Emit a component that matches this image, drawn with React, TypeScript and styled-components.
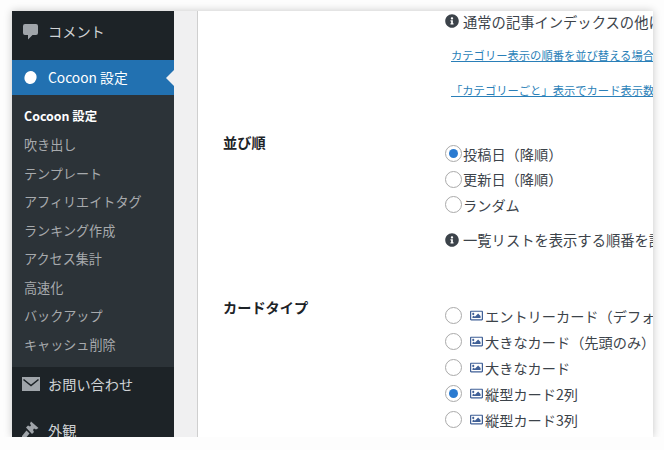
import styled, { createGlobalStyle } from "styled-components";
import { FaInfoCircle, FaRegImage } from "react-icons/fa";

const GlobalStyle = createGlobalStyle`
  html, body {
    margin: 0;
    padding: 0;
    background: #fdfdfd;
  }
  body {
    font-family: "Noto Sans CJK JP", "Noto Sans", sans-serif;
  }
`;

const Frame = styled.div`
  display: flex;
  width: 641px;
  height: 426px;
  margin: 11px 0 0 12px;
  overflow: hidden;
  background: #fff;
  box-shadow: 0 0 8px rgba(0, 0, 0, 0.22);
`;

const Sidebar = styled.nav`
  display: flex;
  flex-direction: column;
  flex: 0 0 162px;
  background: #1d2327;
`;

const TopItem = styled.div<{ $height: number; $gapAbove?: number; $gapBelow?: number }>`
  display: flex;
  align-items: center;
  gap: 5px;
  height: ${({ $height }) => `${$height}px`};
  margin-top: ${({ $gapAbove }) => `${$gapAbove ?? 0}px`};
  flex-shrink: 0;
  padding: 0 0 ${({ $gapBelow }) => `${$gapBelow ?? 0}px`} 6px;
  box-sizing: border-box;
  color: #d0d3d6;
  font-size: 14.2px;
`;

const ActiveItem = styled(TopItem)`
  position: relative;
  background: #2271b1;
  color: #fff;
  font-size: 13.8px;
  &::after {
    content: "";
    position: absolute;
    right: 0;
    top: 10px;
    border: 8px solid transparent;
    border-right-color: #f0f0f1;
    border-left-width: 0;
  }
`;

const IconSlot = styled.span`
  display: flex;
  justify-content: center;
  width: 25px;
  flex-shrink: 0;
`;

const SubMenu = styled.div`
  display: flex;
  flex-direction: column;
  flex: 0 0 272px;
  padding: 7px 0 0 12px;
  box-sizing: border-box;
  background: #2c3338;
`;

const SubItem = styled.div<{ $current?: boolean }>`
  display: flex;
  align-items: center;
  height: 28.5px;
  flex-shrink: 0;
  color: ${({ $current }) => ($current ? "#fff" : "#a7aaad")};
  font-size: ${({ $current }) => ($current ? "12.4px" : "13.1px")};
  font-weight: ${({ $current }) => ($current ? 700 : 400)};
`;

const Gutter = styled.div`
  flex: 0 0 23px;
  background: #f0f0f1;
  border-right: 1px solid #cfcfcf;
`;

const Content = styled.main`
  flex: 1;
  min-width: 0;
  overflow: hidden;
  color: #3c434a;
  font-size: 14.2px;
`;

const Row = styled.section<{ $height: number }>`
  display: grid;
  grid-template-columns: 222px 1fr;
  height: ${({ $height }) => `${$height}px`};
  padding-left: 25px;
`;

const RowLabel = styled.h3`
  margin: 0;
  color: #1d2327;
  font-size: 14.2px;
  font-weight: 700;
  line-height: 20px;
`;

const Field = styled.div<{ $top?: number }>`
  display: flex;
  flex-direction: column;
  min-width: 0;
  padding-top: ${({ $top }) => `${$top ?? 0}px`};
  white-space: nowrap;
`;

const Note = styled.p`
  display: flex;
  align-items: center;
  gap: 4px;
  height: 20px;
  margin: 0;
  font-size: 14.3px;
  svg {
    flex-shrink: 0;
    color: #3c434a;
  }
`;

const TipNote = styled(Note)`
  margin-top: 12px;
`;

const DocLink = styled.a<{ $gap: number }>`
  display: block;
  margin: ${({ $gap }) => `${$gap}px`} 0 0 6px;
  color: #2a7fb8;
  font-size: 11.3px;
  line-height: 16px;
  text-decoration: underline;
`;

const RadioRow = styled.label<{ $pitch: number }>`
  display: flex;
  align-items: center;
  gap: 1px;
  height: ${({ $pitch }) => `${$pitch}px`};
`;

const Radio = styled.input.attrs({ type: "radio" })`
  appearance: none;
  flex-shrink: 0;
  width: 17px;
  height: 17px;
  margin: 0;
  border: 1.5px solid #aaa;
  border-radius: 50%;
  background: #fff;
  display: grid;
  place-items: center;
  box-sizing: border-box;
  &:checked::before {
    content: "";
    width: 9px;
    height: 9px;
    border-radius: 50%;
    background: #2a7bd1;
  }
`;

const CardIcon = styled(FaRegImage)`
  flex-shrink: 0;
  width: 13px;
  height: 13px;
  margin: 0 1px 0 7px;
  color: #3f5f96;
`;

const CommentIcon = () => (
  <svg width="17" height="17" viewBox="0 0 17 17" aria-hidden="true">
    <path
      fill="#a0a5aa"
      d="M3 1h11a2 2 0 0 1 2 2v7a2 2 0 0 1-2 2h-3.5L6 16.5V12H3a2 2 0 0 1-2-2V3a2 2 0 0 1 2-2z"
    />
  </svg>
);

const CocoonIcon = () => (
  <svg width="15" height="15" viewBox="0 0 15 15" aria-hidden="true">
    <ellipse cx="7.5" cy="7.5" rx="6" ry="6.6" fill="#fff" transform="rotate(18 7.5 7.5)" />
  </svg>
);

const MailIcon = () => (
  <svg width="18" height="14" viewBox="0 0 18 14" aria-hidden="true">
    <path fill="#a0a5aa" d="M0 0h18v14H0z" />
    <path fill="none" stroke="#1d2327" strokeWidth="1.6" d="M1.5 2.5 9 8.5l7.5-6" />
  </svg>
);

const BrushIcon = () => (
  <svg width="19" height="19" viewBox="0 0 19 19" aria-hidden="true">
    <path fill="#a0a5aa" d="M10 1.5 17.5 8l-2.5 1.5-2-1-1 1.5 1 2-2 2L5 7.5l2-2 2 1 1-1-1-2z" />
    <path fill="#a0a5aa" d="M5.5 10.5 8.5 13.5 4 19H1v-3z" />
  </svg>
);

const sortOptions = [
  { label: "投稿日（降順）", checked: true },
  { label: "更新日（降順）", checked: false },
  { label: "ランダム", checked: false },
];

const cardOptions = [
  { label: "エントリーカード（デフォルト）", checked: false },
  { label: "大きなカード（先頭のみ）", checked: false },
  { label: "大きなカード", checked: false },
  { label: "縦型カード2列", checked: true },
  { label: "縦型カード3列", checked: false },
];

const subItems = [
  "吹き出し",
  "テンプレート",
  "アフィリエイトタグ",
  "ランキング作成",
  "アクセス集計",
  "高速化",
  "バックアップ",
  "キャッシュ削除",
];

export default function App() {
  return (
    <>
      <GlobalStyle />
      <Frame>
        <Sidebar>
          <TopItem $height={49} $gapBelow={9}>
            <IconSlot>
              <CommentIcon />
            </IconSlot>
            コメント
          </TopItem>
          <ActiveItem $height={35} $gapBelow={1}>
            <IconSlot>
              <CocoonIcon />
            </IconSlot>
            Cocoon 設定
          </ActiveItem>
          <SubMenu>
            <SubItem $current>Cocoon 設定</SubItem>
            {subItems.map((item) => (
              <SubItem key={item}>{item}</SubItem>
            ))}
          </SubMenu>
          <TopItem $height={35} $gapBelow={2}>
            <IconSlot>
              <MailIcon />
            </IconSlot>
            お問い合わせ
          </TopItem>
          <TopItem $height={35} $gapAbove={10}>
            <IconSlot>
              <BrushIcon />
            </IconSlot>
            外観
          </TopItem>
        </Sidebar>
        <Gutter />
        <Content>
          <Row $height={121}>
            <span />
            <Field>
              <Note>
                <FaInfoCircle size={14} />
                通常の記事インデックスの他に
              </Note>
              <DocLink $gap={16}>カテゴリー表示の順番を並び替える場合は</DocLink>
              <DocLink $gap={19}>「カテゴリーごと」表示でカード表示数を</DocLink>
            </Field>
          </Row>
          <Row $height={165}>
            <RowLabel>並び順</RowLabel>
            <Field $top={9}>
              {sortOptions.map((option) => (
                <RadioRow key={option.label} $pitch={25.6}>
                  <Radio name="order" defaultChecked={option.checked} />
                  {option.label}
                </RadioRow>
              ))}
              <TipNote>
                <FaInfoCircle size={14} />
                一覧リストを表示する順番を設定します。
              </TipNote>
            </Field>
          </Row>
          <Row $height={140}>
            <RowLabel>カードタイプ</RowLabel>
            <Field $top={6}>
              {cardOptions.map((option) => (
                <RadioRow key={option.label} $pitch={25.9}>
                  <Radio name="card" defaultChecked={option.checked} />
                  <CardIcon />
                  {option.label}
                </RadioRow>
              ))}
            </Field>
          </Row>
        </Content>
      </Frame>
    </>
  );
}
